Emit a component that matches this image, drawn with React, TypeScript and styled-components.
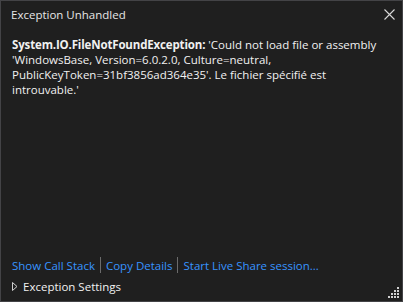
import React from "react";
import styled, { createGlobalStyle } from "styled-components";

const Global = createGlobalStyle`
  html, body { margin: 0; padding: 0; background: #1f1f1f; }
  * { box-sizing: border-box; }
`;

const Dialog = styled.div`
  position: relative;
  width: 403px;
  height: 302px;
  background: #1f1f1f;
  border: 1px solid #434346;
  display: flex;
  flex-direction: column;
  font-family: "Segoe UI", "Open Sans", "Noto Sans", sans-serif;
  font-size: 11.5px;
  color: #f1f1f1;
`;

const TitleBar = styled.div`
  display: flex;
  align-items: center;
  justify-content: space-between;
  height: 27px;
  padding: 0 7px 0 10px;
`;

const Title = styled.div`
  font-size: 11.5px;
  color: #e6e6e6;
`;

const CloseButton = styled.div`
  width: 11px;
  height: 11px;
  display: flex;
  align-items: center;
  justify-content: center;
`;

const Body = styled.div`
  flex: 1;
  padding: 9px 11px 0 11px;
  line-height: 15px;
`;

const Line = styled.div`
  white-space: nowrap;
`;

const Strong = styled.span`
  font-weight: 700;
  letter-spacing: -0.15px;
`;

const Footer = styled.div`
  display: flex;
  flex-direction: column;
  padding: 0 0 7px 11px;
  gap: 6px;
`;

const Links = styled.div`
  display: flex;
  align-items: center;
  gap: 5px;
`;

const Link = styled.span`
  color: #3794ff;
`;

const Sep = styled.span`
  width: 1px;
  height: 16px;
  background: #6b6b6b;
`;

const Settings = styled.div`
  display: flex;
  align-items: center;
  gap: 5px;
  color: #f1f1f1;
`;

const Grip = styled.svg`
  position: absolute;
  right: 3px;
  bottom: 3px;
`;

export default function App() {
  return (
    <>
      <Global />
      <Dialog>
        <TitleBar>
          <Title>Exception Unhandled</Title>
          <CloseButton>
            <svg width="11" height="11" viewBox="0 0 11 11">
              <path d="M0.5 0.5 L10.5 10.5 M10.5 0.5 L0.5 10.5" stroke="#d8d8d8" strokeWidth="1.1" />
            </svg>
          </CloseButton>
        </TitleBar>
        <Body>
          <Line>
            <Strong>System.IO.FileNotFoundException:</Strong> 'Could not load file or assembly
          </Line>
          <Line>'WindowsBase, Version=6.0.2.0, Culture=neutral,</Line>
          <Line>PublicKeyToken=31bf3856ad364e35'. Le fichier spécifié est</Line>
          <Line>introuvable.'</Line>
        </Body>
        <Footer>
          <Links>
            <Link>Show Call Stack</Link>
            <Sep />
            <Link>Copy Details</Link>
            <Sep />
            <Link>Start Live Share session...</Link>
          </Links>
          <Settings>
            <svg width="6" height="9" viewBox="0 0 6 9">
              <path d="M0.5 0.5 L5 4.5 L0.5 8.5 Z" fill="none" stroke="#cfcfcf" strokeWidth="1" />
            </svg>
            Exception Settings
          </Settings>
        </Footer>
        <Grip width="11" height="11" viewBox="0 0 11 11">
          {[
            [9, 0], [9, 3], [6, 3], [9, 6], [6, 6], [3, 6], [9, 9], [6, 9], [3, 9], [0, 9],
          ].map(([x, y], i) => (
            <rect key={i} x={x} y={y} width="2" height="2" fill="#d0d0d0" />
          ))}
        </Grip>
      </Dialog>
    </>
  );
}
